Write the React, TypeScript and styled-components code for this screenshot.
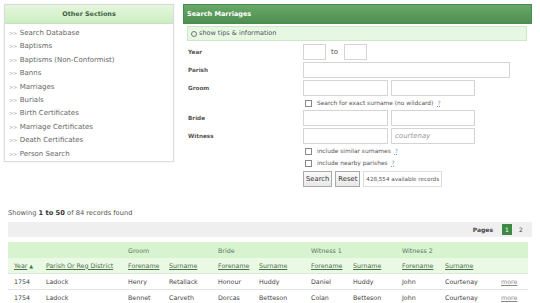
import React from 'react'
import styled, { createGlobalStyle } from 'styled-components'

const GlobalStyle = createGlobalStyle`
  body {
    margin: 0;
    background: #ffffff;
    font-family: "DejaVu Sans", sans-serif;
    font-size: 7px;
    color: #444;
  }
`

const sections = [
  'Search Database',
  'Baptisms',
  'Baptisms (Non-Conformist)',
  'Banns',
  'Marriages',
  'Burials',
  'Birth Certificates',
  'Marriage Certificates',
  'Death Certificates',
  'Person Search',
]

const rows = [
  ['1754', 'Ladock', 'Henry', 'Retallack', 'Honour', 'Huddy', 'Daniel', 'Huddy', 'John', 'Courtenay'],
  ['1754', 'Ladock', 'Bennet', 'Carveth', 'Dorcas', 'Betteson', 'Colan', 'Betteson', 'John', 'Courtenay'],
]

const colWidths = [32, 82, 41, 49, 41, 52, 42, 49, 43, 51, 38]

function App() {
  return (
    <Page>
      <GlobalStyle />
      <Top>
        <Sidebar>
          <SideHeader>Other Sections</SideHeader>
          <SideList>
            {sections.map((s) => (
              <SideItem key={s}>
                <span className="arrows">&gt;&gt;</span>
                {s}
              </SideItem>
            ))}
          </SideList>
        </Sidebar>

        <SearchPanel>
          <PanelHeader>Search Marriages</PanelHeader>
          <TipsBar>
            <TipIcon />
            show tips &amp; information
          </TipsBar>
          <Form>
            <Label>Year</Label>
            <Fields>
              <Input $w={23} />
              <ToText>to</ToText>
              <Input $w={23} />
            </Fields>

            <Label>Parish</Label>
            <Fields>
              <Input $w={207} />
            </Fields>

            <Label>Groom</Label>
            <Fields>
              <Input $w={85} />
              <Input $w={84} />
            </Fields>

            <span />
            <CheckRow>
              <Check />
              Search for exact surname (no wildcard)
              <Help>?</Help>
            </CheckRow>

            <Label>Bride</Label>
            <Fields>
              <Input $w={85} />
              <Input $w={84} />
            </Fields>

            <Label>Witness</Label>
            <Fields>
              <Input $w={85} />
              <Input $w={84} placeholder="courtenay" />
            </Fields>

            <span />
            <CheckRow>
              <Check />
              include similar surnames
              <Help>?</Help>
            </CheckRow>

            <span />
            <CheckRow>
              <Check />
              include nearby parishes
              <Help>?</Help>
            </CheckRow>

            <span />
            <Actions>
              <Button>Search</Button>
              <Button>Reset</Button>
              <Count>428,554 available records</Count>
            </Actions>
          </Form>
        </SearchPanel>
      </Top>

      <Results>
        <Summary>
          Showing <b>1 to 50</b> of 84 records found
        </Summary>
        <PagesBar>
          Pages
          <PageLink $active>1</PageLink>
          <PageLink>2</PageLink>
        </PagesBar>
        <Table>
          <colgroup>
            {colWidths.map((w, i) => (
              <col key={i} style={{ width: w }} />
            ))}
          </colgroup>
          <thead>
            <GroupRow>
              <th colSpan={2} />
              <th colSpan={2}>Groom</th>
              <th colSpan={2}>Bride</th>
              <th colSpan={2}>Witness 1</th>
              <th colSpan={2}>Witness 2</th>
              <th />
            </GroupRow>
            <ColRow>
              <th>
                <a>Year</a> <Arrow>▲</Arrow>
              </th>
              <th><a>Parish Or Reg District</a></th>
              <th><a>Forename</a></th>
              <th><a>Surname</a></th>
              <th><a>Forename</a></th>
              <th><a>Surname</a></th>
              <th><a>Forename</a></th>
              <th><a>Surname</a></th>
              <th><a>Forename</a></th>
              <th><a>Surname</a></th>
              <th />
            </ColRow>
          </thead>
          <tbody>
            {rows.map((r, i) => (
              <DataRow key={i}>
                {r.map((c, j) => (
                  <td key={j}>{c}</td>
                ))}
                <td className="more"><a>more</a></td>
              </DataRow>
            ))}
          </tbody>
        </Table>
      </Results>
    </Page>
  )
}

const Page = styled.div`
  width: 540px;
  height: 303px;
  overflow: hidden;
  padding: 4px 8px 0 4px;
  box-sizing: border-box;
`

const Top = styled.div`
  display: flex;
  align-items: flex-start;
  gap: 9px;
`

const Sidebar = styled.div`
  width: 170px;
  height: 158px;
  box-sizing: border-box;
  border: 1px solid #dcdcdc;
  box-shadow: 0 0 2px rgba(0, 0, 0, 0.08);
`

const SideHeader = styled.div`
  height: 18px;
  line-height: 18px;
  text-align: center;
  font-weight: bold;
  font-size: 6.4px;
  color: #3f5f3f;
  background: linear-gradient(#e4f6dc, #cdeec3);
  border-bottom: 1px solid #c6e2bc;
`

const SideList = styled.ul`
  list-style: none;
  margin: 0;
  padding: 3px 0 0 4px;
`

const SideItem = styled.li`
  height: 13.4px;
  line-height: 13.4px;
  color: #666;
  .arrows {
    color: #aaa;
    font-size: 5px;
    margin-right: 3px;
    letter-spacing: -0.3px;
  }
`

const SearchPanel = styled.div`
  flex: 1;
`

const PanelHeader = styled.div`
  height: 18px;
  line-height: 18px;
  padding-left: 3px;
  font-weight: bold;
  font-size: 6.5px;
  color: #ffffff;
  background: linear-gradient(#67a867, #4f8e52);
  border: 1px solid #4b8a4e;
`

const TipsBar = styled.div`
  margin: 2px 5px 0 4px;
  height: 13px;
  line-height: 13px;
  padding-left: 3px;
  display: flex;
  align-items: center;
  gap: 2px;
  color: #556;
  font-size: 6.5px;
  background: #e6f8e2;
  border: 1px solid #cfe6c8;
`

const TipIcon = styled.span`
  width: 4px;
  height: 4px;
  border: 1px solid #777;
  border-radius: 50%;
`

const Form = styled.div`
  display: grid;
  grid-template-columns: 115px 1fr;
  align-items: center;
  row-gap: 2px;
  padding: 3px 0 0 5px;
`

const Label = styled.div`
  font-weight: bold;
  color: #555;
  font-size: 5.7px;
`

const Fields = styled.div`
  display: flex;
  align-items: center;
  gap: 3px;
`

const Input = styled.input<{ $w: number }>`
  width: ${(p) => p.$w}px;
  height: 16px;
  box-sizing: border-box;
  border: 1px solid #d4d4d4;
  margin: 0;
  padding: 0 3px;
  font-family: inherit;
  font-size: 7px;
  font-style: italic;
  outline: none;
  &::placeholder {
    color: #999;
  }
`

const ToText = styled.span`
  margin: 0 3px 0 2px;
  color: #555;
`

const CheckRow = styled.div`
  display: flex;
  align-items: center;
  height: 10px;
  padding-left: 2px;
  color: #555;
  font-size: 5.9px;
`

const Check = styled.span`
  width: 5px;
  height: 5px;
  border: 1px solid #888;
  margin-right: 5px;
`

const Help = styled.span`
  color: #7a8fb0;
  margin-left: 4px;
  text-decoration: underline dotted;
`

const Actions = styled.div`
  display: flex;
  gap: 3px;
  margin-top: 1px;
`

const Button = styled.span`
  height: 16px;
  line-height: 14px;
  box-sizing: border-box;
  padding: 0 2px;
  border: 1px solid #aaa;
  background: linear-gradient(#fafafa, #e8e8e8);
  color: #333;
  font-size: 6.8px;
`

const Count = styled.span`
  height: 16px;
  line-height: 14px;
  box-sizing: border-box;
  padding: 0 2px;
  border: 1px solid #ddd;
  color: #555;
  font-size: 5.6px;
`

const Results = styled.div`
  padding: 0 0 0 4px;
  margin-top: 21px;
`

const Summary = styled.div`
  height: 10px;
  line-height: 10px;
  color: #555;
  font-size: 6.7px;
  b {
    color: #333;
  }
`

const PagesBar = styled.div`
  margin-top: 4px;
  height: 15px;
  display: flex;
  align-items: center;
  justify-content: flex-end;
  gap: 4px;
  padding-right: 6px;
  background: #efefef;
  font-weight: bold;
  color: #444;
  font-size: 6px;
`

const PageLink = styled.span<{ $active?: boolean }>`
  width: 10px;
  height: 11px;
  line-height: 11px;
  text-align: center;
  font-weight: normal;
  margin-left: ${(p) => (p.$active ? 5 : 0)}px;
  background: ${(p) => (p.$active ? '#3e8a45' : 'transparent')};
  color: ${(p) => (p.$active ? '#ffffff' : '#444')};
`

const Table = styled.table`
  margin-top: 5px;
  width: 520px;
  table-layout: fixed;
  border-collapse: collapse;
  font-size: 6.3px;
  th,
  td {
    text-align: left;
    padding: 0 0 0 6px;
    white-space: nowrap;
    overflow: hidden;
  }
`

const GroupRow = styled.tr`
  height: 16px;
  background: #d7f3cf;
  th {
    font-weight: normal;
    color: #5a7a5a;
  }
`

const ColRow = styled.tr`
  height: 15px;
  background: #e9f9e4;
  border-bottom: 1px solid #dde8da;
  th {
    font-weight: normal;
  }
  a {
    color: #4b6e4b;
    text-decoration: underline;
  }
`

const Arrow = styled.span`
  color: #3e7a44;
  font-size: 5px;
`

const DataRow = styled.tr`
  height: 16px;
  border-bottom: 1px solid #e4e4e4;
  color: #444;
  .more {
    padding-left: 11px;
    a {
      color: #888;
      text-decoration: underline;
    }
  }
`

export default App
